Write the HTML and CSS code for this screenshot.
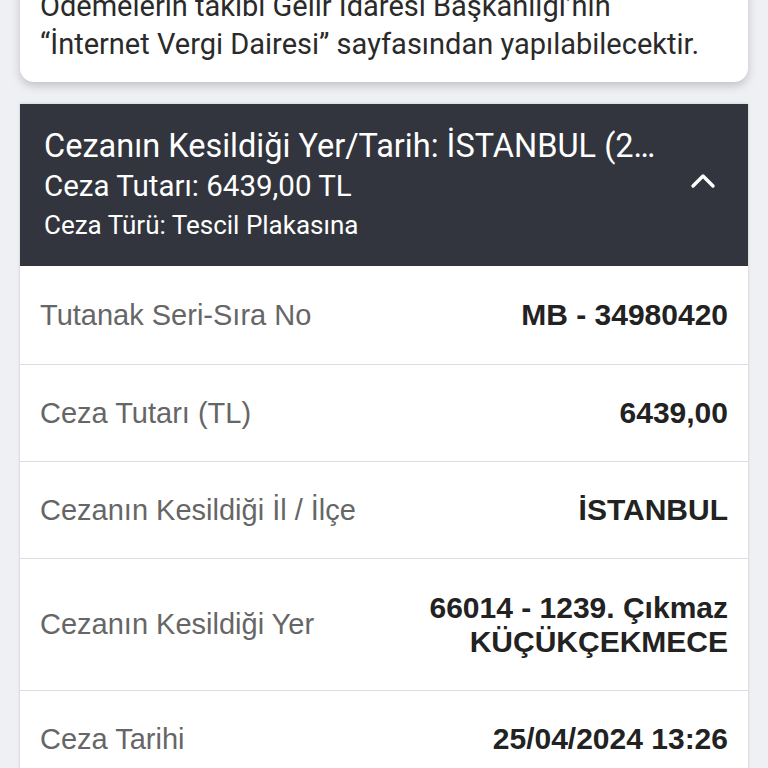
FILE: index.html
```html
<!DOCTYPE html>
<html lang="tr">
<head>
  <meta charset="UTF-8">
  <meta name="viewport" content="width=device-width, initial-scale=1.0">
  <title>Ceza Sorgulama</title>
  <link rel="stylesheet" href="styles.css">
</head>
<body>
  <div class="page">

    <!-- Bilgi kartı -->
    <div class="info-card">
      <p>Ödemelerin takibi Gelir İdaresi Başkanlığı’nın</p>
      <p>“İnternet Vergi Dairesi” sayfasından yapılabilecektir.</p>
    </div>

    <!-- Ceza detayı -->
    <div class="fine">
      <div class="fine-head">
        <div class="fine-head-text">
          <div class="fine-title">Cezanın Kesildiği Yer/Tarih: İSTANBUL (25/04/2024 13:26)</div>
          <div class="fine-amount">Ceza Tutarı: 6439,00 TL</div>
          <div class="fine-type">Ceza Türü: Tescil Plakasına</div>
        </div>
        <svg class="chevron" width="26" height="18" viewBox="0 0 26 18">
          <path d="M3 14 L13 4 L23 14" fill="none" stroke="#fff" stroke-width="3.4" stroke-linecap="round" stroke-linejoin="round"/>
        </svg>
      </div>

      <div class="row row-first">
        <span class="label">Tutanak Seri-Sıra No</span>
        <span class="value">MB - 34980420</span>
      </div>
      <div class="row">
        <span class="label">Ceza Tutarı (TL)</span>
        <span class="value">6439,00</span>
      </div>
      <div class="row">
        <span class="label">Cezanın Kesildiği İl / İlçe</span>
        <span class="value">İSTANBUL</span>
      </div>
      <div class="row row-tall">
        <span class="label">Cezanın Kesildiği Yer</span>
        <span class="value">66014 - 1239. Çıkmaz<br>KÜÇÜKÇEKMECE</span>
      </div>
      <div class="row">
        <span class="label">Ceza Tarihi</span>
        <span class="value">25/04/2024 13:26</span>
      </div>
    </div>

  </div>
</body>
</html>
```

FILE: styles.css
```css
body {
  margin: 0;
  padding: 0;
  background-color: #eff0f3;
  font-family: 'Liberation Sans', Arial, sans-serif;
  color: #222;
  overflow: hidden;
}
.page {
  padding: 0 20px;
}
.info-card {
  margin-top: -30px;
  padding: 17px 20px 19px;
  background-color: #fff;
  border-radius: 0 0 14px 14px;
  box-shadow: 0 4px 8px rgba(60, 64, 80, 0.25);
  font-family: Roboto, sans-serif;
  font-size: 29px;
  line-height: 38px;
  color: #2a2a2a;
}
.info-card p {
  margin: 0;
  white-space: nowrap;
}
.fine {
  margin-top: 22px;
  background-color: #fff;
  box-shadow: 0 0 3px rgba(0, 0, 0, 0.18);
}
.fine-head {
  height: 162px;
  padding: 0 32px 0 24px;
  background-color: #32353d;
  color: #fff;
  display: flex;
  align-items: center;
  gap: 22px;
  font-family: Roboto, sans-serif;
}
.fine-head-text {
  flex: 1;
  min-width: 0;
}
.fine-title {
  font-size: 32.5px;
  line-height: 40px;
  white-space: nowrap;
  overflow: hidden;
  text-overflow: ellipsis;
}
.fine-amount {
  font-size: 29.5px;
  line-height: 40px;
}
.fine-type {
  font-size: 26px;
  line-height: 38px;
}
.chevron {
  flex-shrink: 0;
  margin-bottom: 8px;
}
.row {
  height: 96px;
  padding: 0 20px;
  border-top: 1px solid #dcdde0;
  display: flex;
  align-items: center;
  justify-content: space-between;
  font-size: 29px;
}
.row-first {
  height: 98px;
  border-top: none;
}
.row-tall {
  height: 131px;
}
.label {
  color: #666;
}
.value {
  font-size: 30px;
  font-weight: bold;
  color: #222;
  text-align: right;
  line-height: 34px;
}
```
